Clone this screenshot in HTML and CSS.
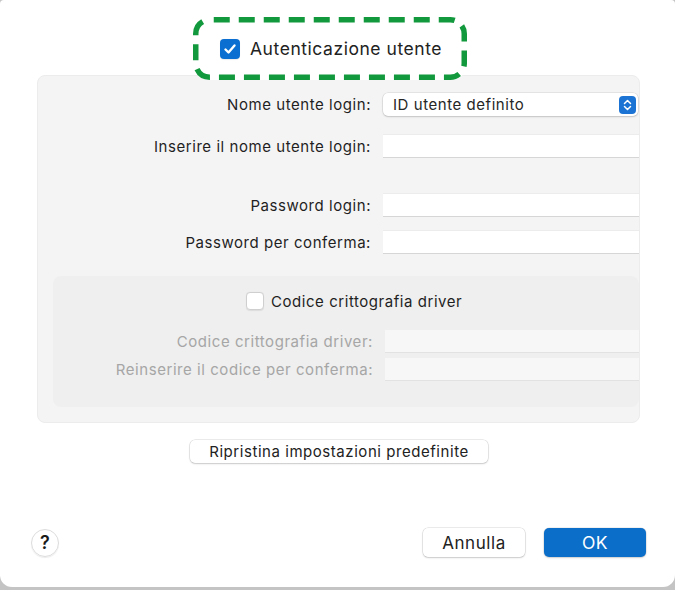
FILE: index.html
```html
<!DOCTYPE html>
<html>
<head>
    <title>Autenticazione utente</title>
    <link rel="stylesheet" href="styles.css">
</head>
<body>
<div class="window">
    <div class="highlight">
        <svg class="dashes" width="274" height="63" viewBox="0 0 274 63"><rect x="2.75" y="2.75" width="268.5" height="57.5" rx="14" fill="none" stroke="#12993d" stroke-width="5.5" stroke-dasharray="16 9" stroke-dashoffset="-4"/></svg>
        <span class="check checked">
            <svg width="20" height="20" viewBox="0 0 20 20"><path d="M5.5 10.5 L8.5 13.5 L14.5 6.5" fill="none" stroke="#fff" stroke-width="2.4" stroke-linecap="round" stroke-linejoin="round"/></svg>
        </span>
        <span class="title">Autenticazione utente</span>
    </div>
    <div class="panel">
        <div class="row first">
            <label>Nome utente login:</label>
            <div class="select">
                <span>ID utente definito</span>
                <span class="stepper">
                    <svg width="17" height="18" viewBox="0 0 17 18"><path d="M5.5 7.5 L8.5 4.5 L11.5 7.5 M5.5 10.5 L8.5 13.5 L11.5 10.5" fill="none" stroke="#fff" stroke-width="1.5" stroke-linecap="round" stroke-linejoin="round"/></svg>
                </span>
            </div>
        </div>
        <div class="row second">
            <label>Inserire il nome utente login:</label>
            <div class="field"></div>
        </div>
        <div class="row third">
            <label>Password login:</label>
            <div class="field"></div>
        </div>
        <div class="row fourth">
            <label>Password per conferma:</label>
            <div class="field"></div>
        </div>
        <div class="inner">
            <div class="inner-check">
                <span class="check"></span>
                <span>Codice crittografia driver</span>
            </div>
            <div class="row dim top">
                <label>Codice crittografia driver:</label>
                <div class="field off"></div>
            </div>
            <div class="row dim">
                <label>Reinserire il codice per conferma:</label>
                <div class="field off"></div>
            </div>
        </div>
    </div>
    <div class="button reset">Ripristina impostazioni predefinite</div>
    <div class="footer">
        <div class="help">?</div>
        <div class="spacer"></div>
        <div class="button cancel">Annulla</div>
        <div class="button ok">OK</div>
    </div>
</div>
</body>
</html>
```

FILE: styles.css
```css
html, body {
    margin: 0;
    padding: 0;
}

body {
    background-color: #c4c4c4;
    font-family: Inter, "Liberation Sans", sans-serif;
    color: #1f1f1f;
    width: 675px;
    height: 590px;
    overflow: hidden;
    letter-spacing: 0.55px;
}

.window {
    background-color: #ffffff;
    height: 587px;
    border-radius: 4px 4px 12px 12px;
    display: flex;
    flex-direction: column;
    box-sizing: border-box;
    padding-top: 17px;
}

.highlight {
    position: relative;
    z-index: 2;
    margin-left: 193px;
    width: 274px;
    height: 63px;
    box-sizing: border-box;
    border-radius: 16px;
    background-color: #ffffff;
    display: flex;
    align-items: center;
    padding-left: 27px;
    margin-bottom: -5px;
}

.dashes {
    position: absolute;
    left: 0;
    top: 0;
}

.check {
    width: 18px;
    height: 18px;
    border-radius: 4px;
    box-sizing: border-box;
    border: 1px solid #cfcfcf;
    background-color: #ffffff;
    display: inline-flex;
    align-items: center;
    justify-content: center;
    box-shadow: 0 0.5px 1px rgba(0, 0, 0, 0.08);
}

.check.checked {
    width: 20px;
    height: 20px;
    border: none;
    background-color: #0a6fd0;
}

.title {
    font-size: 17.5px;
    margin-left: 10px;
    color: #222222;
}

.panel {
    margin-left: 37px;
    width: 603px;
    height: 348px;
    box-sizing: border-box;
    background-color: #f5f4f5;
    border: 1px solid #ececec;
    border-radius: 8px;
    overflow: hidden;
    padding-top: 17px;
}

.row {
    display: grid;
    grid-template-columns: 333px 258px;
    column-gap: 12px;
    align-items: center;
    font-size: 15px;
}

.row label {
    text-align: right;
}

.second { margin-top: 18px; }
.third { margin-top: 35px; }
.fourth { margin-top: 13px; }

.select {
    height: 23px;
    width: 255px;
    background-color: #ffffff;
    border-radius: 5px;
    box-shadow: 0 0 0 0.5px rgba(0, 0, 0, 0.12), 0 1px 2px rgba(0, 0, 0, 0.15);
    display: flex;
    align-items: center;
    justify-content: space-between;
    padding: 0 2px 0 10px;
    box-sizing: border-box;
    font-size: 15px;
    color: #262626;
}

.stepper {
    width: 17px;
    height: 18px;
    border-radius: 4px;
    background-color: #1b74d3;
    display: flex;
}

.field {
    height: 24px;
    background-color: #ffffff;
    border-top: 1px solid #ececec;
    border-bottom: 1px solid #d6d6d6;
    box-sizing: border-box;
}

.inner {
    margin-top: 22px;
    margin-left: 15px;
    width: 586px;
    height: 131px;
    box-sizing: border-box;
    background-color: #efefef;
    border-radius: 8px;
    overflow: hidden;
    padding-top: 16px;
}

.inner .row {
    grid-template-columns: 320px 260px;
}

.inner-check {
    display: flex;
    align-items: center;
    font-size: 15px;
    margin-left: 193px;
    height: 18px;
}

.inner-check span:last-child {
    margin-left: 7px;
}

.dim {
    color: #a6a6a6;
    margin-top: 5px;
}

.dim.top {
    margin-top: 20px;
}

.field.off {
    height: 23px;
    background-color: #f7f7f7;
    border-top: none;
    border-bottom: 1px solid #e2e2e2;
}

.button {
    height: 23px;
    box-sizing: border-box;
    background-color: #ffffff;
    border-radius: 5px;
    box-shadow: 0 0 0 0.5px rgba(0, 0, 0, 0.15), 0 1px 2px rgba(0, 0, 0, 0.15);
    display: flex;
    align-items: center;
    justify-content: center;
    font-size: 15px;
    color: #222222;
}

.reset {
    margin-top: 17px;
    margin-left: 190px;
    width: 298px;
}

.footer {
    display: flex;
    align-items: center;
    margin-top: 65px;
    padding-left: 31px;
    padding-right: 29px;
}

.help {
    width: 28px;
    height: 28px;
    border-radius: 50%;
    box-sizing: border-box;
    border: 1px solid #dcdcdc;
    box-shadow: 0 1px 1px rgba(0, 0, 0, 0.08);
    display: flex;
    align-items: center;
    justify-content: center;
    font-size: 18px;
    font-weight: 600;
    color: #1a1a1a;
    letter-spacing: 0;
}

.spacer {
    flex: 1;
}

.cancel, .ok {
    width: 102px;
    height: 29px;
    font-size: 17px;
}

.ok {
    margin-left: 19px;
    background-color: #0b6ec9;
    color: #ffffff;
    box-shadow: 0 0 0 0.5px rgba(0, 0, 0, 0.1), 0 1px 2px rgba(0, 0, 0, 0.15);
    font-size: 17.5px;
}
```
